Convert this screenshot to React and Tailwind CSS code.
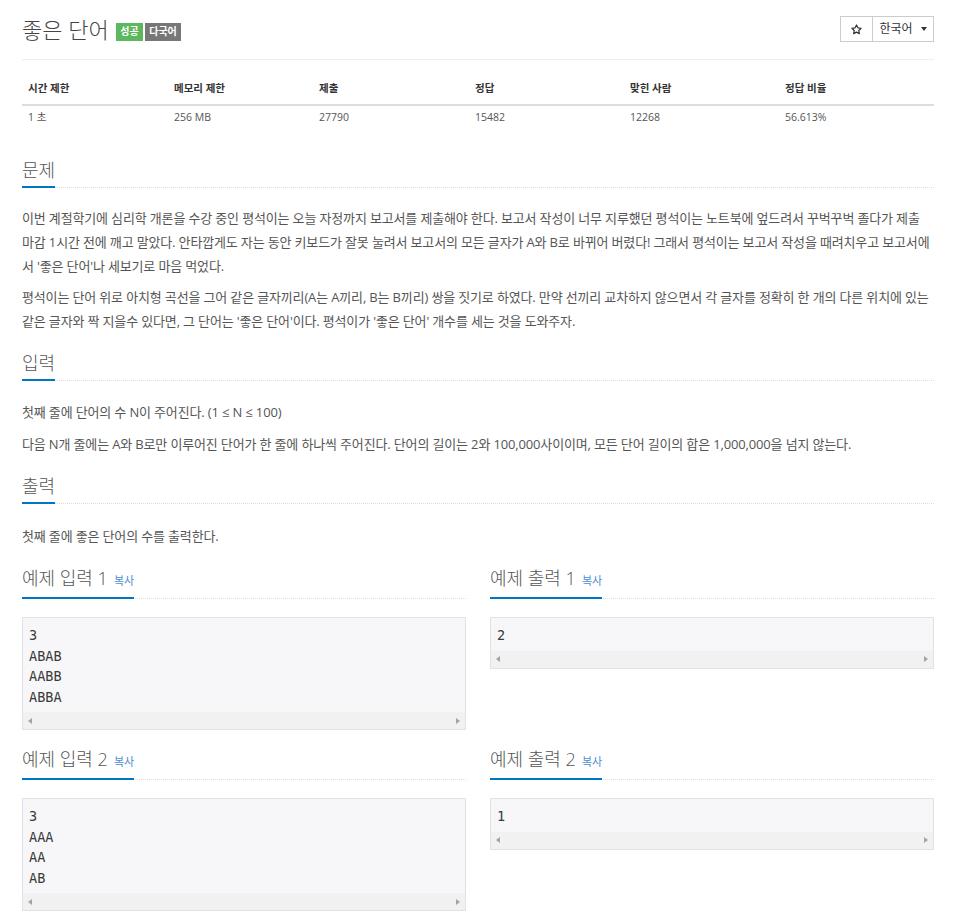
import React from "react";

function Headline({ title, copy }) {
  return (
    <div className="border-b border-dotted border-[#dcdcdc]">
      <h2 className="inline-block -mb-px border-b-2 border-[#0076c0] pb-[4px] text-[18px] leading-[24px] font-light text-[#555]">
        {title}
        {copy && <span className="ml-[6px] text-[11px] font-normal text-[#4a90d0]">복사</span>}
      </h2>
    </div>
  );
}

function Sample({ title, lines }) {
  return (
    <div>
      <Headline title={title} copy />
      <div className="mt-[18px] border border-[#e1e1e8] bg-[#f7f7f9]">
        <div className="pl-[6px] pt-[7px] pb-[5px] font-['DejaVu_Sans_Mono',monospace] text-[13.5px] leading-[20.5px] text-[#3a3a3a]">
          {lines.map((l, i) => (
            <div key={i}>{l}</div>
          ))}
        </div>
        <div className="flex h-[17px] items-center justify-between bg-[#f1f1f1] px-[5px]">
          <span className="h-0 w-0 border-y-[3.5px] border-r-[4px] border-y-transparent border-r-[#a3a3a3]" />
          <span className="h-0 w-0 border-y-[3.5px] border-l-[4px] border-y-transparent border-l-[#a3a3a3]" />
        </div>
      </div>
    </div>
  );
}

export default function App() {
  const cols = [
    ["시간 제한", "1 초"],
    ["메모리 제한", "256 MB"],
    ["제출", "27790"],
    ["정답", "15482"],
    ["맞힌 사람", "12268"],
    ["정답 비율", "56.613%"],
  ];
  return (
    <div className="min-h-[917px] bg-white pl-[22px] pr-[20px] pt-[14px] font-['Open_Sans','Noto_Sans_CJK_KR',sans-serif] text-[#555]">
      {/* header */}
      <div className="flex items-center justify-between border-b border-[#eee] pb-[15px]">
        <div className="flex h-[30px] items-center">
          <span className="inline-block w-[94px] text-[22px] leading-[30px] font-light text-[#444]">좋은 단어</span>
          <span className="mt-[5px] flex h-[18px] w-[27px] items-center justify-center bg-[#5cb85c] text-[10px] font-bold text-white">성공</span>
          <span className="ml-[2px] mt-[5px] flex h-[18px] w-[36px] items-center justify-center bg-[#777] text-[10px] font-bold text-white">다국어</span>
        </div>
        <div className="flex h-[26px] border border-[#ccc] text-[12px] text-[#333]">
          <div className="flex w-[31px] items-center justify-center">
            <svg width="11" height="11" viewBox="0 0 24 24" fill="none" stroke="#333" strokeWidth="2.6" strokeLinejoin="round">
              <polygon points="12 2 15.09 8.26 22 9.27 17 14.14 18.18 21.02 12 17.77 5.82 21.02 7 14.14 2 9.27 8.91 8.26 12 2" />
            </svg>
          </div>
          <div className="flex w-[61px] items-center justify-center border-l border-[#ccc]">
            <span>한국어</span>
            <span className="ml-[8px] h-0 w-0 border-x-[3px] border-t-[4px] border-x-transparent border-t-[#333]" />
          </div>
        </div>
      </div>

      {/* info table */}
      <div className="mt-[12px] text-[10.5px]">
        <div className="grid grid-cols-[146px_145px_156px_155px_155px_1fr] border-b-2 border-[#ddd]">
          {cols.map(([h]) => (
            <div key={h} className="pl-[6px] pt-[8px] pb-[7px] leading-[17px] font-bold text-[#333]">{h}</div>
          ))}
        </div>
        <div className="grid grid-cols-[146px_145px_156px_155px_155px_1fr]">
          {cols.map(([h, v]) => (
            <div key={h} className="pl-[6px] pt-[3px] pb-[4px] leading-[17px] text-[#555]">{v}</div>
          ))}
        </div>
      </div>

      {/* 문제 */}
      <div className="mt-[28px]">
        <Headline title="문제" />
        <div className="mt-[18px] flex flex-col gap-[7px] text-[13px] leading-[24px] tracking-[-0.15px]">
          <p>
            이번 계절학기에 심리학 개론을 수강 중인 평석이는 오늘 자정까지 보고서를 제출해야 한다. 보고서 작성이 너무 지루했던 평석이는 노트북에 엎드려서 꾸벅꾸벅 졸다가 제출 마감 1시간 전에 깨고 말았다. 안타깝게도 자는 동안 키보드가 잘못 눌려서 보고서의 모든 글자가 A와 B로 바뀌어 버렸다! 그래서 평석이는 보고서 작성을 때려치우고 보고서에서 '좋은 단어'나 세보기로 마음 먹었다.
          </p>
          <p>
            평석이는 단어 위로 아치형 곡선을 그어 같은 글자끼리(A는 A끼리, B는 B끼리) 쌍을 짓기로 하였다. 만약 선끼리 교차하지 않으면서 각 글자를 정확히 한 개의 다른 위치에 있는 같은 글자와 짝 지을수 있다면, 그 단어는 '좋은 단어'이다. 평석이가 '좋은 단어' 개수를 세는 것을 도와주자.
          </p>
        </div>
      </div>

      {/* 입력 */}
      <div className="mt-[18px]">
        <Headline title="입력" />
        <div className="mt-[19px] flex flex-col gap-[8px] text-[13px] leading-[24px] tracking-[-0.15px]">
          <p>첫째 줄에 단어의 수 N이 주어진다. (1 ≤ N ≤ 100)</p>
          <p>다음 N개 줄에는 A와 B로만 이루어진 단어가 한 줄에 하나씩 주어진다. 단어의 길이는 2와 100,000사이이며, 모든 단어 길이의 합은 1,000,000을 넘지 않는다.</p>
        </div>
      </div>

      {/* 출력 */}
      <div className="mt-[18px]">
        <Headline title="출력" />
        <div className="mt-[20px] text-[13px] leading-[24px] tracking-[-0.15px]">
          <p>첫째 줄에 좋은 단어의 수를 출력한다.</p>
        </div>
      </div>

      {/* samples */}
      <div className="mt-[18px] grid grid-cols-2 items-start gap-x-[24px] gap-y-[17px]">
        <Sample title="예제 입력 1" lines={["3", "ABAB", "AABB", "ABBA"]} />
        <Sample title="예제 출력 1" lines={["2"]} />
        <Sample title="예제 입력 2" lines={["3", "AAA", "AA", "AB"]} />
        <Sample title="예제 출력 2" lines={["1"]} />
      </div>
    </div>
  );
}
